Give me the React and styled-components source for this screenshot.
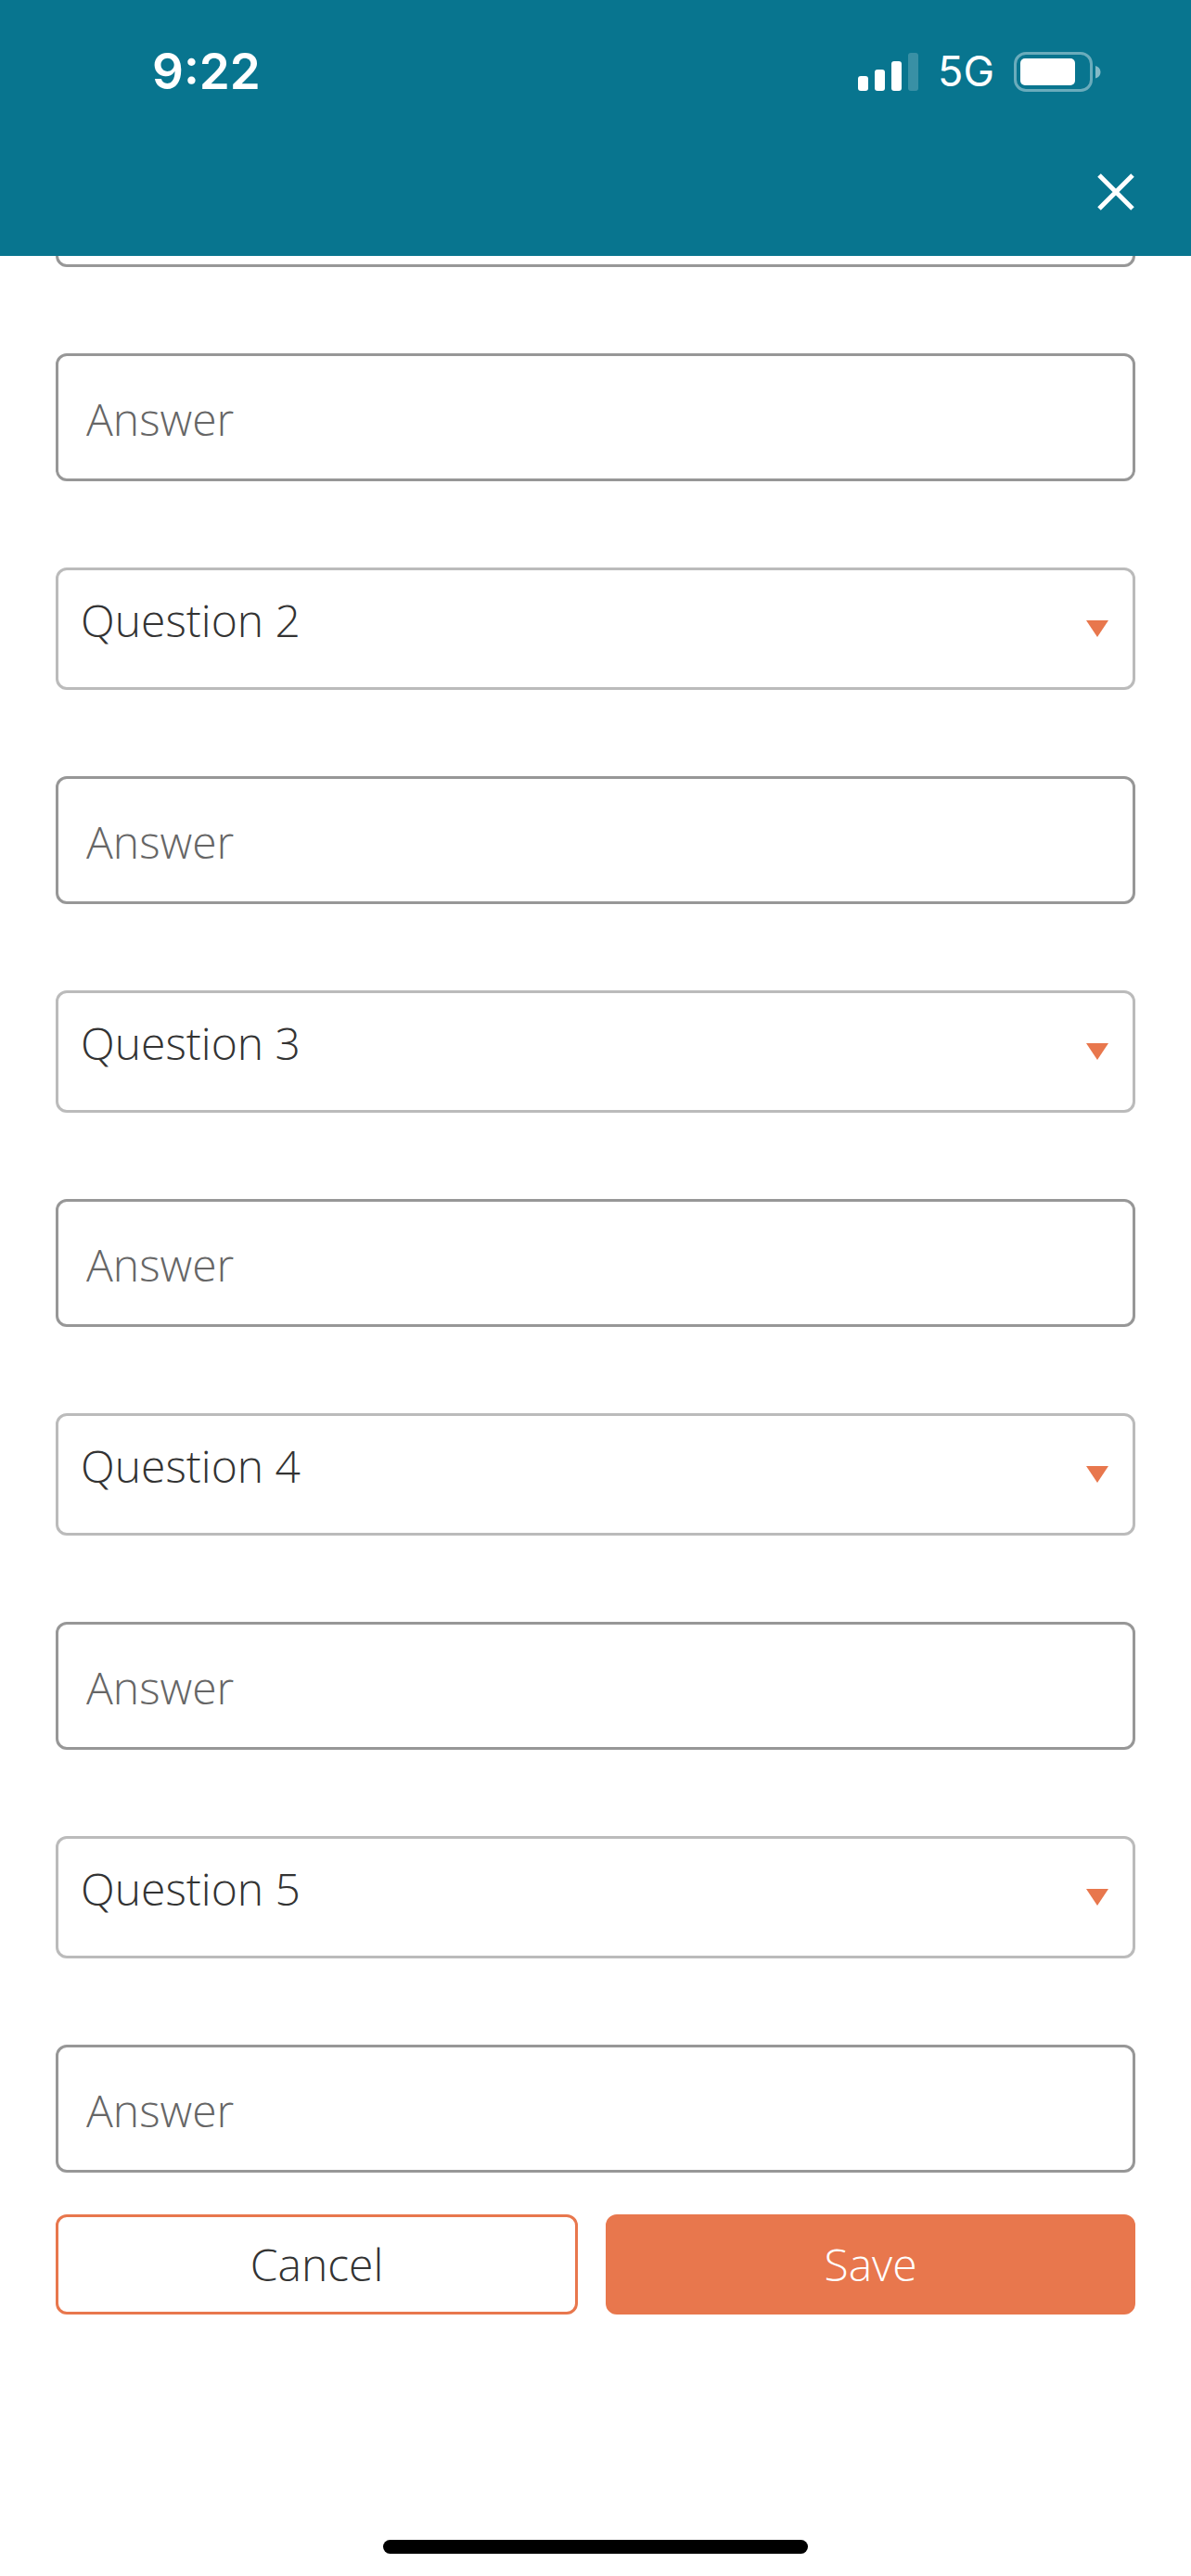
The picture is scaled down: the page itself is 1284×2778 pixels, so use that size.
import React from "react";
import styled, { createGlobalStyle } from "styled-components";

const GlobalStyle = createGlobalStyle`
  *, *::before, *::after { box-sizing: border-box; }
  body { margin: 0; background: #ffffff; }
  button, input, select { font: inherit; margin: 0; }
`;

const Screen = styled.div`
  display: flex;
  flex-direction: column;
  height: 100vh;
  overflow: hidden;
  font-family: "Open Sans", "Noto Sans", sans-serif;
  font-size: 48px;
  font-weight: 300;
  line-height: 64px;
  color: #333333;
  background: #ffffff;
`;

const Header = styled.header`
  flex: none;
  color: #ffffff;
  background: #08758f;
`;

const StatusBar = styled.div`
  display: flex;
  align-items: center;
  justify-content: space-between;
  padding: 45px 97px 0 164px;
  font-family: Inter, "Liberation Sans", sans-serif;
`;

const Time = styled.time`
  font-size: 53px;
  font-weight: 600;
`;

const Indicators = styled.div`
  display: flex;
  align-items: center;
  gap: 21px;
`;

const Network = styled.span`
  font-size: 45px;
  font-weight: 400;
`;

const TitleBar = styled.div`
  display: flex;
  justify-content: flex-end;
  padding: 66px 49px 37px;
`;

const CloseButton = styled.button`
  display: flex;
  padding: 12px;
  border: 0;
  color: inherit;
  background: none;
`;

const Content = styled.main`
  flex: 1;
  min-height: 0;
  overflow: hidden;
`;

/* The list is scrolled so that the first question is mostly under the header. */
const Form = styled.form`
  display: flex;
  flex-direction: column;
  gap: 45px;
  margin-top: -120px;
  padding: 0 60px;
`;

const Fields = styled.div`
  display: flex;
  flex-direction: column;
  gap: 93px;
`;

const SelectBox = styled.div`
  position: relative;
  display: flex;
`;

const Select = styled.select`
  width: 100%;
  height: 132px;
  padding: 0 80px 18px 24px;
  border: 3px solid ${(p) => (p.$active ? "#979797" : "#bbbbbb")};
  border-radius: 12px;
  color: inherit;
  background: #ffffff;
  appearance: none;
`;

const Arrow = styled.svg`
  position: absolute;
  top: 57px;
  right: 29px;
  pointer-events: none;
`;

const Answer = styled.input`
  width: 100%;
  height: 138px;
  padding: 3px 30px 0;
  border: 3px solid #979797;
  border-radius: 12px;
  color: inherit;
  background: #ffffff;

  &::placeholder {
    color: #666666;
    opacity: 1;
  }
`;

const Actions = styled.div`
  display: grid;
  grid-template-columns: 563fr 571fr;
  gap: 30px;
`;

const Button = styled.button`
  height: 108px;
  padding: 0;
  border: 3px solid #e8774d;
  border-radius: 12px;
  color: ${(p) => (p.$primary ? "#ffffff" : "#333333")};
  background: ${(p) => (p.$primary ? "#e8774d" : "#ffffff")};
`;

const HomeArea = styled.footer`
  display: flex;
  justify-content: center;
  padding-bottom: 24px;
`;

const HomeIndicator = styled.div`
  width: 458px;
  height: 15px;
  border-radius: 8px;
  background: #000000;
`;

function Signal() {
  return (
    <svg width="65" height="41" viewBox="0 0 65 41" fill="#fff" aria-hidden="true">
      <rect x="0" y="25" width="11" height="16" rx="3" />
      <rect x="18" y="18" width="11" height="23" rx="3" />
      <rect x="36" y="9" width="11" height="32" rx="3" />
      <rect x="54" y="0" width="11" height="41" rx="3" opacity="0.2" />
    </svg>
  );
}

function Battery() {
  return (
    <svg width="94" height="43" viewBox="0 0 94 43" fill="#fff" aria-hidden="true">
      <rect x="1.5" y="1.5" width="82" height="40" rx="11.5" fill="none" stroke="#fff" strokeWidth="3" opacity="0.4" />
      <rect x="7" y="7" width="59" height="29" rx="5" />
      <path d="M88 15c3.500 1 5.500 3.500 5.500 6.750s-2 5.750-5.500 6.750z" opacity="0.5" />
    </svg>
  );
}

const questions = [1, 2, 3, 4, 5];

export default function App() {
  return (
    <Screen>
      <GlobalStyle />
      <Header>
        <StatusBar>
          <Time>9:22</Time>
          <Indicators>
            <Signal />
            <Network>5G</Network>
            <Battery />
          </Indicators>
        </StatusBar>
        <TitleBar>
          <CloseButton type="button" aria-label="Close">
            <svg width="40" height="40" viewBox="0 0 40 40" stroke="#fff" strokeWidth="5" aria-hidden="true">
              <path d="M2 2l36 36M38 2L2 38" />
            </svg>
          </CloseButton>
        </TitleBar>
      </Header>
      <Content>
        <Form onSubmit={(e) => e.preventDefault()}>
          <Fields>
            {questions.map((n) => (
              <React.Fragment key={n}>
                <SelectBox>
                  <Select aria-label={`Question ${n}`} $active={n === 1}>
                    <option>{`Question ${n}`}</option>
                  </Select>
                  <Arrow width="24" height="18" viewBox="0 0 24 18" aria-hidden="true">
                    <path d="M0 0h24L12 18z" fill="#e8774d" />
                  </Arrow>
                </SelectBox>
                <Answer type="text" placeholder="Answer" aria-label={`Answer ${n}`} />
              </React.Fragment>
            ))}
          </Fields>
          <Actions>
            <Button type="button">Cancel</Button>
            <Button type="submit" $primary>Save</Button>
          </Actions>
        </Form>
      </Content>
      <HomeArea>
        <HomeIndicator />
      </HomeArea>
    </Screen>
  );
}
